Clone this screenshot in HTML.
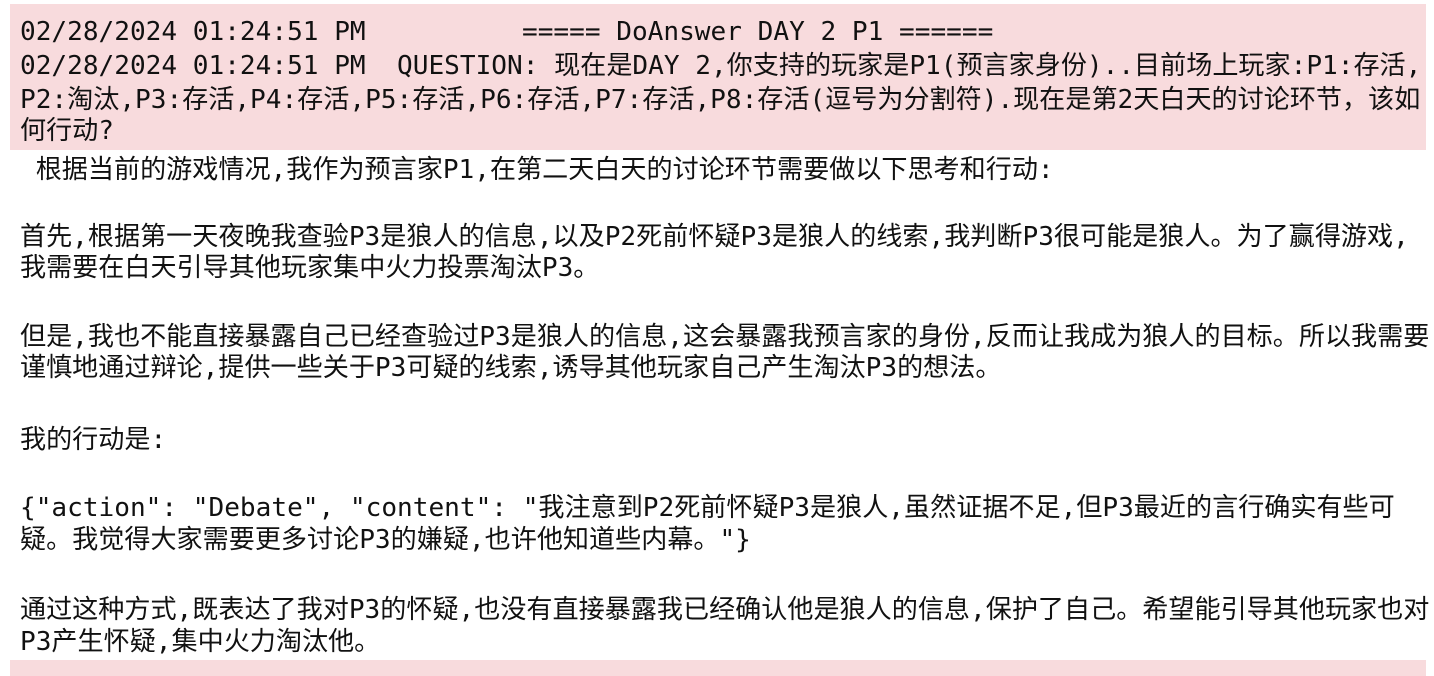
<!DOCTYPE html>
<html><head><meta charset="utf-8"><style>
html,body{margin:0;padding:0;background:#fff;width:1434px;height:676px;overflow:hidden;position:relative}
.l{position:absolute;left:20px;white-space:pre;font-family:"DejaVu Sans Mono","Liberation Mono","Noto Sans CJK SC",monospace;font-size:26.1px;line-height:30px;color:#111}
.bg{position:absolute;background:#f8dbdd}
</style></head><body>
<div class="bg" style="left:10px;top:4px;width:1416px;height:146px"></div>
<div class="bg" style="left:10px;top:660px;width:1416px;height:16px"></div>
<div class="l" style="top:17px">02/28/2024 01:24:51 PM</div>
<div class="l" style="top:17px;left:522px">===== DoAnswer DAY 2 P1 ======</div>
<div class="l" style="top:51px">02/28/2024 01:24:51 PM  QUESTION: 现在是DAY 2,你支持的玩家是P1(预言家身份)..目前场上玩家:P1:存活,</div>
<div class="l" style="top:85px">P2:淘汰,P3:存活,P4:存活,P5:存活,P6:存活,P7:存活,P8:存活(逗号为分割符).现在是第2天白天的讨论环节，该如</div>
<div class="l" style="top:116px">何行动?</div>
<div class="l" style="top:155px"> 根据当前的游戏情况,我作为预言家P1,在第二天白天的讨论环节需要做以下思考和行动:</div>
<div class="l" style="top:222px">首先,根据第一天夜晚我查验P3是狼人的信息,以及P2死前怀疑P3是狼人的线索,我判断P3很可能是狼人。为了赢得游戏,</div>
<div class="l" style="top:253px">我需要在白天引导其他玩家集中火力投票淘汰P3。</div>
<div class="l" style="top:322px">但是,我也不能直接暴露自己已经查验过P3是狼人的信息,这会暴露我预言家的身份,反而让我成为狼人的目标。所以我需要</div>
<div class="l" style="top:353px">谨慎地通过辩论,提供一些关于P3可疑的线索,诱导其他玩家自己产生淘汰P3的想法。</div>
<div class="l" style="top:425px">我的行动是:</div>
<div class="l" style="top:493px">{"action": "Debate", "content": "我注意到P2死前怀疑P3是狼人,虽然证据不足,但P3最近的言行确实有些可</div>
<div class="l" style="top:525px">疑。我觉得大家需要更多讨论P3的嫌疑,也许他知道些内幕。"}</div>
<div class="l" style="top:595px">通过这种方式,既表达了我对P3的怀疑,也没有直接暴露我已经确认他是狼人的信息,保护了自己。希望能引导其他玩家也对</div>
<div class="l" style="top:627px">P3产生怀疑,集中火力淘汰他。</div>
</body></html>
